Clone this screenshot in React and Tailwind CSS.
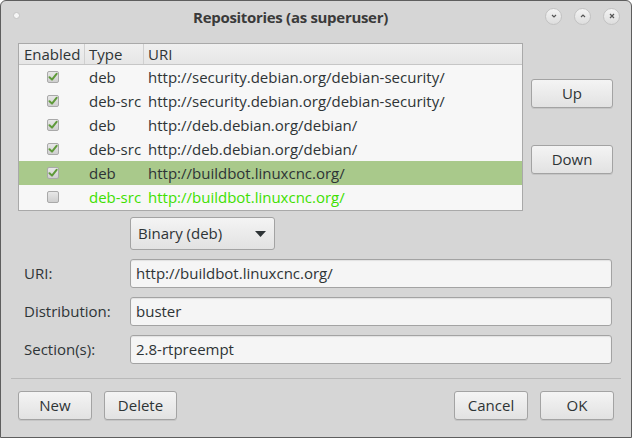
import React from "react";

const rows = [
  { on: true, type: "deb", uri: "http://security.debian.org/debian-security/" },
  { on: true, type: "deb-src", uri: "http://security.debian.org/debian-security/" },
  { on: true, type: "deb", uri: "http://deb.debian.org/debian/" },
  { on: true, type: "deb-src", uri: "http://deb.debian.org/debian/" },
  { on: true, type: "deb", uri: "http://buildbot.linuxcnc.org/", sel: true },
  { on: false, type: "deb-src", uri: "http://buildbot.linuxcnc.org/", green: true },
];

function Check({ on }) {
  return (
    <div className="w-[12px] h-[12px] rounded-[2px] border border-[#a9a9a9] bg-gradient-to-b from-[#e8e8e8] to-[#cfcfcf] flex items-center justify-center">
      {on && (
        <svg width="10" height="10" viewBox="0 0 10 10">
          <path d="M1.5 5.2 L4 7.6 L8.6 1.8" fill="none" stroke="#5f9a3a" strokeWidth="2" strokeLinecap="round" strokeLinejoin="round" />
        </svg>
      )}
    </div>
  );
}

function Btn({ children, w }) {
  return (
    <div
      className={`${w} h-[29px] rounded-[3px] border border-[#a3a3a3] bg-gradient-to-b from-[#f4f4f4] to-[#e2e2e2] shadow-[0_1px_0_rgba(0,0,0,0.08)] flex items-center justify-center text-[15px] text-[#2e3436]`}
    >
      {children}
    </div>
  );
}

function TitleBtn({ children }) {
  return (
    <div className="w-[17px] h-[17px] rounded-full border border-[#c2c2c2] bg-gradient-to-b from-[#f4f4f4] to-[#dddddd] flex items-center justify-center">
      {children}
    </div>
  );
}

function Field({ label, value }) {
  return (
    <div className="flex items-center">
      <div className="w-[112px] pl-[6px] text-[15px] text-[#2e3436]">{label}</div>
      <div className="flex-1 h-[29px] rounded-[3px] border border-[#a3a3a3] bg-[#f5f5f5] shadow-[inset_0_1px_1px_rgba(0,0,0,0.08)] flex items-center pl-[5px] text-[15px] text-[#2e3436]">
        {value}
      </div>
    </div>
  );
}

export default function App() {
  return (
    <div
      className="w-[632px] h-[438px] bg-[#d6d6d6] border border-[#5e5e5e] rounded-t-[6px] flex flex-col overflow-hidden"
      style={{ fontFamily: '"Open Sans", "Noto Sans", sans-serif' }}
    >
      {/* title bar */}
      <div className="h-[33px] flex items-center pl-[12px] pr-[11px] relative">
        <div className="w-[7px] h-[7px] rounded-full bg-[#f6f6f6] border border-[#c4c4c4] mt-[-4px]" />
        <div className="flex-1 text-center text-[15px] font-bold text-[#3a3a3a] tracking-[-0.3px] pl-[16px]">
          Repositories (as superuser)
        </div>
        <div className="flex items-center gap-[12px] mt-[-3px]">
          <TitleBtn>
            <svg width="8" height="8" viewBox="0 0 8 8"><path d="M2 3 L4 5 L6 3" fill="none" stroke="#555" strokeWidth="1.2" /></svg>
          </TitleBtn>
          <TitleBtn>
            <svg width="8" height="8" viewBox="0 0 8 8"><path d="M2 5 L4 3 L6 5" fill="none" stroke="#555" strokeWidth="1.2" /></svg>
          </TitleBtn>
          <TitleBtn>
            <svg width="8" height="8" viewBox="0 0 8 8"><path d="M2 2 L6 6 M6 2 L2 6" fill="none" stroke="#555" strokeWidth="1.2" /></svg>
          </TitleBtn>
        </div>
      </div>

      {/* top section */}
      <div className="flex pl-[17px] pr-[18px] pt-[9px]">
        <div className="w-[505px] h-[168px] border border-[#a9a9a9] bg-[#f7f7f7] flex flex-col text-[15px] text-[#2e3436]">
          <div className="h-[21px] flex bg-gradient-to-b from-[#f0f0f0] to-[#e6e6e6] border-b border-[#c6c6c6]">
            <div className="w-[66px] pl-[5px] border-r border-[#d0d0d0] leading-[21px]">Enabled</div>
            <div className="w-[59px] pl-[4px] border-r border-[#d0d0d0] leading-[21px]">Type</div>
            <div className="flex-1 pl-[4px] leading-[21px]">URI</div>
          </div>
          {rows.map((r, i) => (
            <div
              key={i}
              className={`h-[24px] flex items-center ${r.sel ? "bg-[#a9c98b]" : ""} ${r.green ? "text-[#3ee000]" : ""}`}
            >
              <div className="w-[66px] flex justify-center pl-[1px]">
                <Check on={r.on} />
              </div>
              <div className="w-[59px] pl-[4px]">{r.type}</div>
              <div className="flex-1 pl-[4px]">{r.uri}</div>
            </div>
          ))}
        </div>
        <div className="flex-1 flex flex-col items-end pt-[36px] gap-[37px]">
          <Btn w="w-[82px]">Up</Btn>
          <Btn w="w-[82px]">Down</Btn>
        </div>
      </div>

      {/* combo */}
      <div className="pl-[129px] pt-[6px]">
        <div className="w-[145px] h-[33px] rounded-[3px] border border-[#a3a3a3] bg-gradient-to-b from-[#f4f4f4] to-[#e2e2e2] flex items-center pl-[7px] pr-[8px] text-[15px] text-[#2e3436]">
          <span className="flex-1">Binary (deb)</span>
          <svg width="11" height="6" viewBox="0 0 11 6"><path d="M0 0 L11 0 L5.5 6 Z" fill="#2e3436" /></svg>
        </div>
      </div>

      {/* fields */}
      <div className="flex flex-col gap-[9px] pl-[17px] pr-[19px] pt-[9px]">
        <Field label="URI:" value="http://buildbot.linuxcnc.org/" />
        <Field label="Distribution:" value="buster" />
        <Field label="Section(s):" value="2.8-rtpreempt" />
      </div>

      <div className="mx-[10px] mt-[14px] border-t border-[#b9b9b9]" />

      <div className="flex px-[17px] pt-[12px]">
        <div className="flex gap-[12px]">
          <Btn w="w-[74px]">New</Btn>
          <Btn w="w-[73px]">Delete</Btn>
        </div>
        <div className="flex-1" />
        <div className="flex gap-[12px]">
          <Btn w="w-[74px]">Cancel</Btn>
          <Btn w="w-[74px]">OK</Btn>
        </div>
      </div>
    </div>
  );
}
